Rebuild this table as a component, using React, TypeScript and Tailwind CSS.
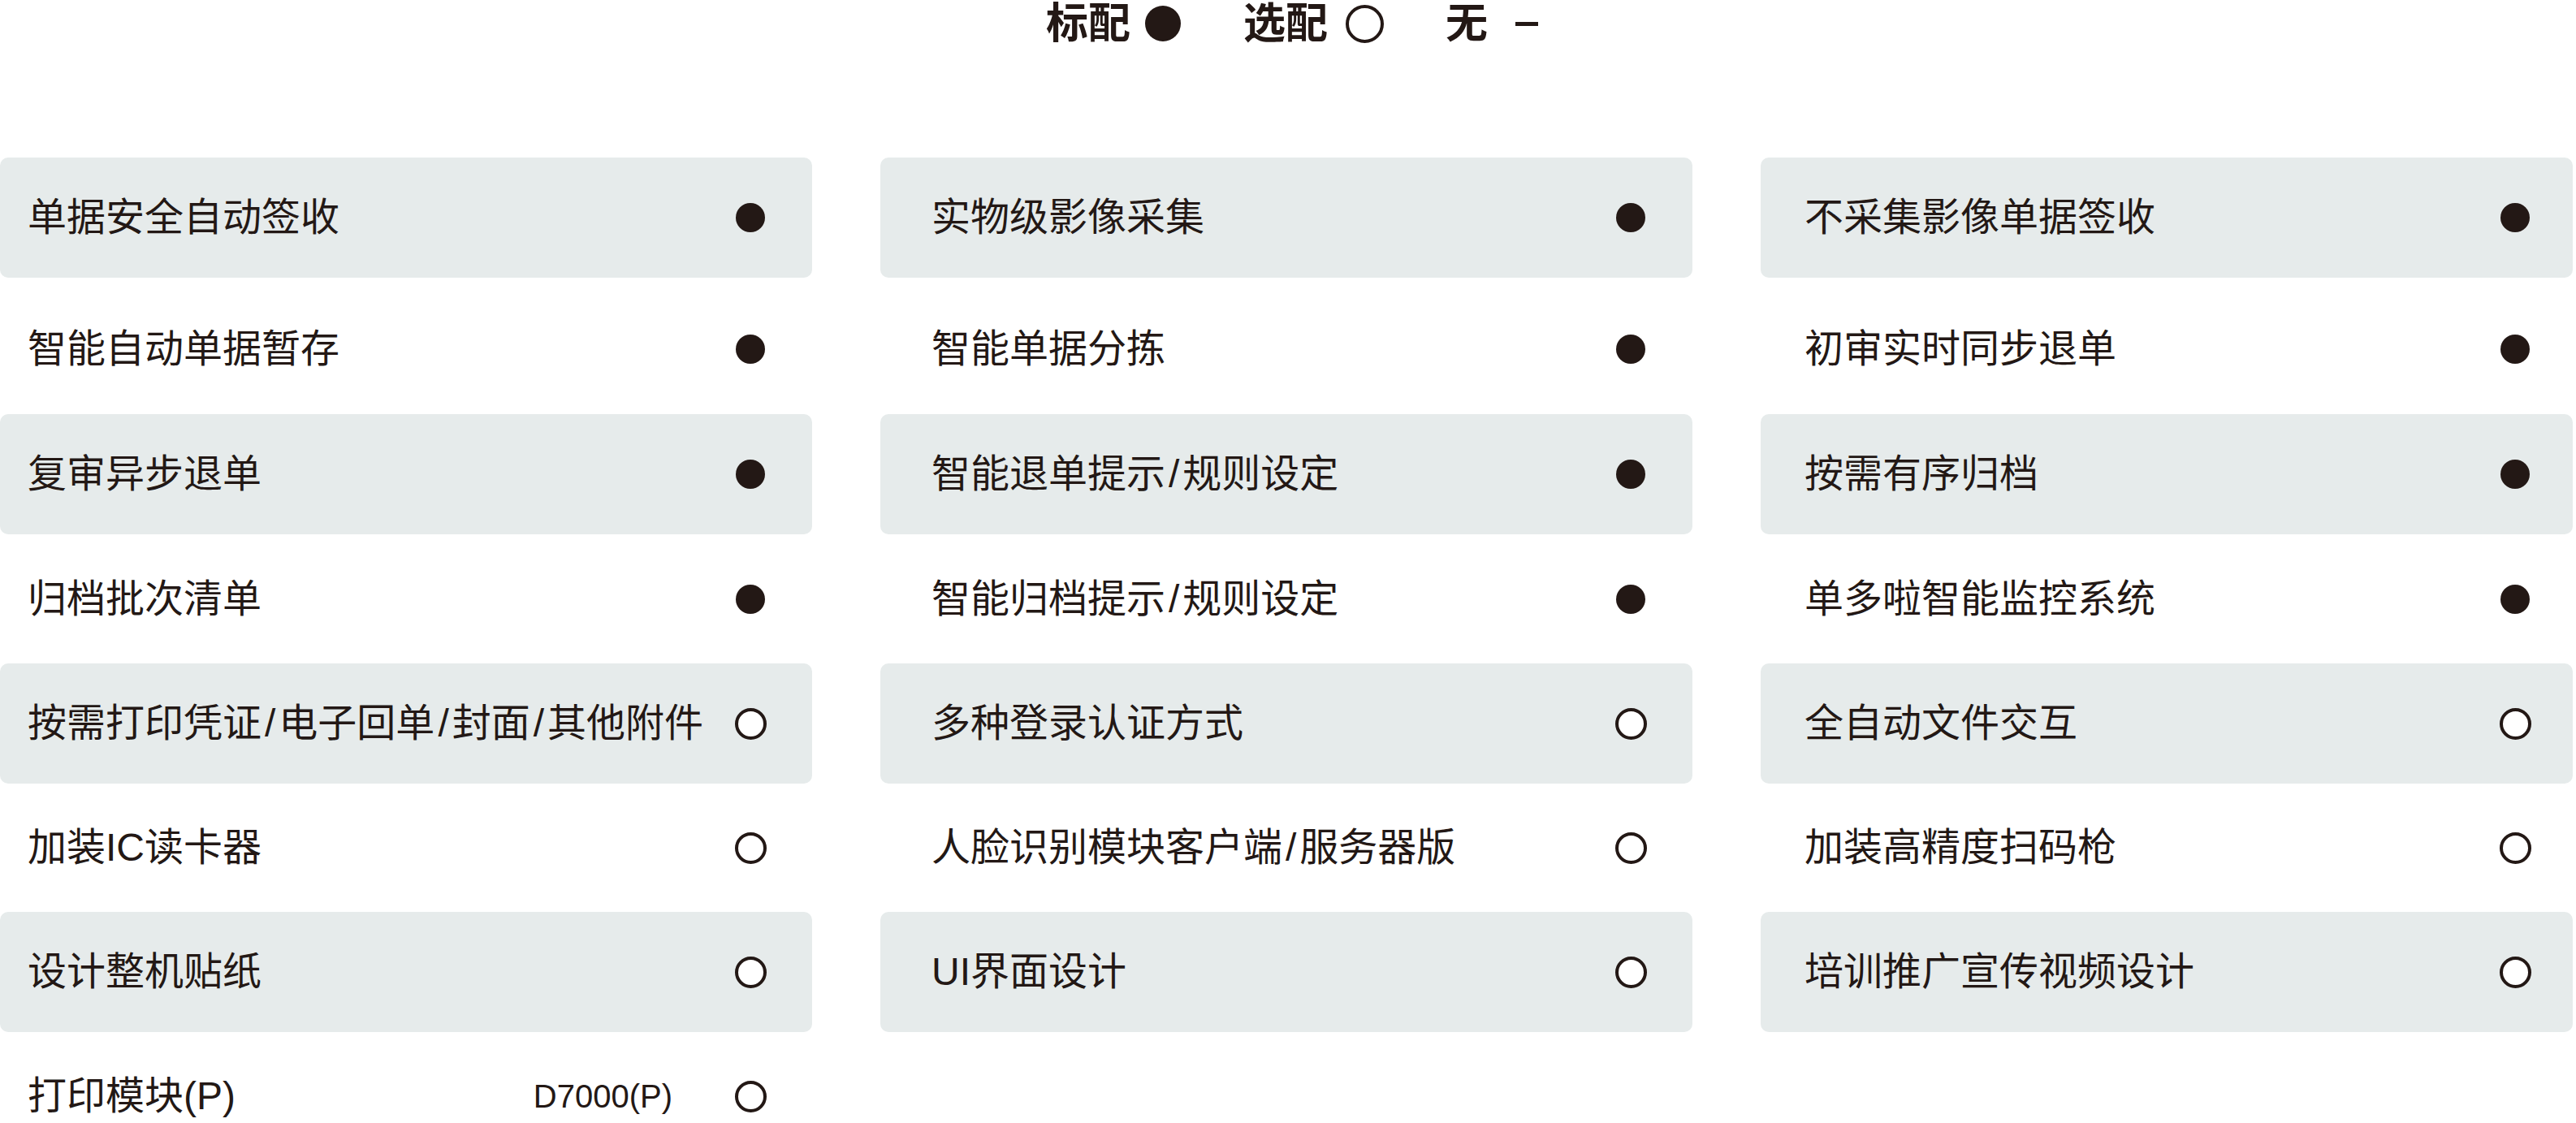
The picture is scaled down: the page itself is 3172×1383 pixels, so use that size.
type Kind = 'std' | 'opt';

type Cell = {
  label: string;
  kind: Kind;
  note?: string;
};

type Row = {
  shaded: boolean;
  cells: (Cell | null)[];
};

const rows: Row[] = [
  {
    shaded: true,
    cells: [
      { label: '单据安全自动签收', kind: 'std' },
      { label: '实物级影像采集', kind: 'std' },
      { label: '不采集影像单据签收', kind: 'std' },
    ],
  },
  {
    shaded: false,
    cells: [
      { label: '智能自动单据暂存', kind: 'std' },
      { label: '智能单据分拣', kind: 'std' },
      { label: '初审实时同步退单', kind: 'std' },
    ],
  },
  {
    shaded: true,
    cells: [
      { label: '复审异步退单', kind: 'std' },
      { label: '智能退单提示/规则设定', kind: 'std' },
      { label: '按需有序归档', kind: 'std' },
    ],
  },
  {
    shaded: false,
    cells: [
      { label: '归档批次清单', kind: 'std' },
      { label: '智能归档提示/规则设定', kind: 'std' },
      { label: '单多啦智能监控系统', kind: 'std' },
    ],
  },
  {
    shaded: true,
    cells: [
      { label: '按需打印凭证/电子回单/封面/其他附件', kind: 'opt' },
      { label: '多种登录认证方式', kind: 'opt' },
      { label: '全自动文件交互', kind: 'opt' },
    ],
  },
  {
    shaded: false,
    cells: [
      { label: '加装IC读卡器', kind: 'opt' },
      { label: '人脸识别模块客户端/服务器版', kind: 'opt' },
      { label: '加装高精度扫码枪', kind: 'opt' },
    ],
  },
  {
    shaded: true,
    cells: [
      { label: '设计整机贴纸', kind: 'opt' },
      { label: 'UI界面设计', kind: 'opt' },
      { label: '培训推广宣传视频设计', kind: 'opt' },
    ],
  },
  {
    shaded: false,
    cells: [{ label: '打印模块(P)', kind: 'opt', note: 'D7000(P)' }, null, null],
  },
];

// each column has its own inset in the source artwork
const colPad = ['pl-[34px] pr-[56px]', 'pl-[63px] pr-[56px]', 'pl-[54px] pr-[51px]'];
// spacing under each row (the top two sit a little looser)
const rowGap = ['mb-[14px]', 'mb-[6px]', 'mb-[6px]', 'mb-[5px]', 'mb-[5px]', 'mb-[5px]', 'mb-[5px]', ''];

const Marker = ({ kind }: { kind: Kind }) => (
  <div className="w-[40px] flex justify-center items-center shrink-0">
    {kind === 'std' ? (
      <span className="block w-[36px] h-[36px] rounded-full bg-[#231815]" />
    ) : (
      <span className="block w-[39px] h-[39px] rounded-full bg-white border-[4px] border-[#231815]" />
    )}
  </div>
);

// slashes get a little air so they sit like the CJK font's wider ones
const Label = ({ text }: { text: string }) => {
  const parts = text.split('/');
  return (
    <span className="flex-1 whitespace-nowrap">
      {parts.map((p, i) => (
        <span key={i}>
          {i > 0 && <span className="mx-[4px]">/</span>}
          {p}
        </span>
      ))}
    </span>
  );
};

const App = () => {
  return (
    <div
      className="w-[3172px] min-h-screen bg-white text-[#231815]"
      style={{ fontFamily: '"Liberation Sans", "Noto Sans CJK SC", sans-serif' }}
    >
      {/* legend */}
      <div className="h-[58px] pl-[10px] flex items-center justify-center text-[52px] font-bold leading-none">
        <span>标配</span>
        <span className="ml-[18px] block w-[44px] h-[44px] rounded-full bg-[#231815]" />
        <span className="ml-[77px]">选配</span>
        <span className="ml-[22px] block w-[47px] h-[47px] rounded-full border-[4px] border-[#231815]" />
        <span className="ml-[76px]">无</span>
        <span className="ml-[34px] block w-[28px] h-[5px] bg-[#231815]" />
      </div>

      <div className="mt-[136px] flex flex-col">
        {rows.map((row, r) => (
          <div key={r} className={`grid grid-cols-[1000px_1000px_1000px] gap-x-[84px] ${rowGap[r]}`}>
            {row.cells.map((cell, c) =>
              cell ? (
                <div
                  key={c}
                  className={`h-[148px] flex items-center rounded-[10px] text-[48px] leading-none ${colPad[c]} ${
                    row.shaded ? 'bg-[#e6ebeb]' : ''
                  }`}
                >
                  <Label text={cell.label} />
                  {cell.note && <span className="text-[40px] mr-[76px]">{cell.note}</span>}
                  <Marker kind={cell.kind} />
                </div>
              ) : (
                <div key={c} className="h-[148px]" />
              )
            )}
          </div>
        ))}
      </div>
    </div>
  );
};

export default App;
